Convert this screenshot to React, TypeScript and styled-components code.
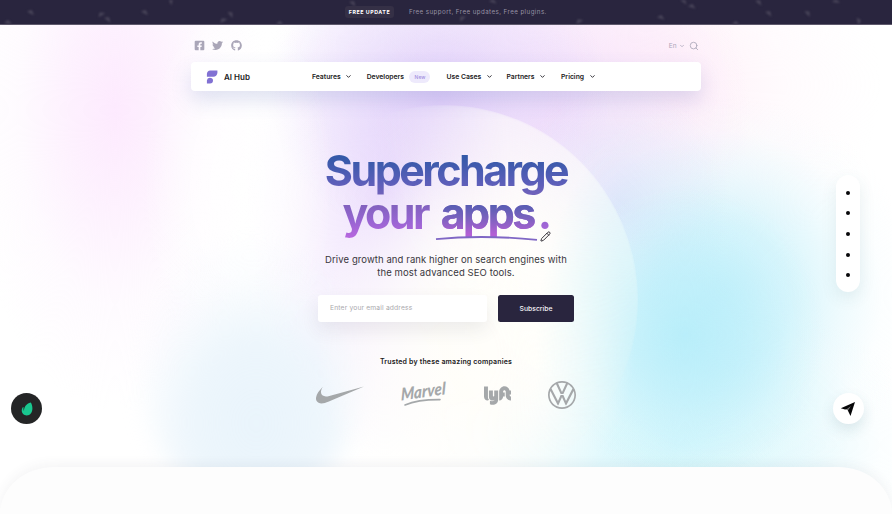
import React from "react";
import styled, { createGlobalStyle } from "styled-components";
import { FaFacebookSquare, FaTwitter, FaGithub } from "react-icons/fa";
import { SiNike, SiLyft, SiVolkswagen } from "react-icons/si";
import { ChevronDown, Search, Pencil } from "lucide-react";

const Global = createGlobalStyle`
  * { box-sizing: border-box; }
  body { margin: 0; background: #fff; font-family: Inter, sans-serif; color: #1b1a22; overflow: hidden; }
  svg { display: block; flex: none; }
`;

const Page = styled.div`
  position: relative;
  width: 892px;
  height: 514px;
  overflow: hidden;
  display: flex;
  flex-direction: column;
`;

const Promo = styled.div`
  position: relative;
  height: 24.5px;
  flex: none;
  background: #29253e;
  border-bottom: 1px solid #5e596c;
  display: flex;
  align-items: center;
  padding-left: 345px;
  gap: 15px;
`;

const Confetti = styled.svg`
  position: absolute;
  inset: 0;
  filter: blur(0.8px);
`;

const PromoTag = styled.span`
  position: relative;
  width: 49px;
  height: 12px;
  border-radius: 3px;
  background: #353046;
  color: #fff;
  font-size: 5.3px;
  line-height: 12px;
  font-weight: 700;
  letter-spacing: 0.55px;
  text-align: center;
  white-space: nowrap;
`;

const PromoText = styled.span`
  position: relative;
  color: #9793a4;
  font-size: 6.2px;
  letter-spacing: 0.43px;
  white-space: nowrap;
`;

const Hero = styled.main`
  position: relative;
  flex: 1;
  display: flex;
  flex-direction: column;
  align-items: center;
  background:
    radial-gradient(ellipse 95px 190px at 238px 160px, rgba(255,255,255,.8) 0%, rgba(255,255,255,.5) 50%, rgba(255,255,255,0) 100%),
    radial-gradient(ellipse 150px 300px at 115px 85px, #fdeafe 0%, rgba(253,238,254,.8) 32%, rgba(253,244,254,.4) 65%, rgba(255,255,255,0) 100%),
    radial-gradient(ellipse 140px 150px at 685px 310px, rgba(180,237,250,.85) 0%, rgba(184,238,250,.6) 40%, rgba(190,240,250,.2) 75%, rgba(190,240,250,0) 100%),
    radial-gradient(ellipse 195px 200px at 722px 270px, rgba(186,237,250,.75) 0%, rgba(192,239,250,.6) 35%, rgba(208,243,251,.34) 62%, rgba(230,249,253,.12) 82%, rgba(255,255,255,0) 100%),
    radial-gradient(ellipse 250px 150px at 680px 420px, rgba(200,244,251,.8) 0%, rgba(212,246,252,.5) 50%, rgba(235,251,254,.18) 80%, rgba(240,251,254,0) 100%),
    radial-gradient(ellipse 110px 120px at 620px 180px, rgba(218,224,250,.85) 0%, rgba(225,230,250,.5) 45%, rgba(230,238,252,0) 100%),
    radial-gradient(ellipse 170px 150px at 440px 70px, rgba(212,192,248,.65) 0%, rgba(222,206,250,.45) 45%, rgba(240,228,252,0) 100%),
    radial-gradient(ellipse 190px 190px at 560px 85px, rgba(240,216,250,.75) 0%, rgba(248,226,250,.5) 50%, rgba(255,244,251,0) 100%),
    radial-gradient(ellipse 210px 190px at 670px 60px, rgba(255,238,247,.9) 0%, rgba(255,246,251,.45) 55%, rgba(255,248,252,0) 100%),
    radial-gradient(ellipse 140px 260px at 385px 170px, rgba(236,221,252,.9) 0%, rgba(243,232,253,.6) 50%, rgba(255,255,255,0) 100%),
    #fff;
`;

const Orb = styled.div<{ $variant: "large" | "small" }>`
  position: absolute;
  border-radius: 50%;
  ${({ $variant }) =>
    $variant === "large"
      ? `left: 250px; top: 80px; width: 388px; height: 390px;
         background:
           radial-gradient(ellipse 110px 220px at 395px 250px, rgba(200,241,249,.75), rgba(225,249,250,0)),
           radial-gradient(ellipse 210px 260px at 215px 250px, rgba(255,254,250,1) 15%, rgba(255,254,251,.55) 100%);
         -webkit-mask-image: radial-gradient(circle 340px at 300px 70px, #000 35%, transparent 92%), linear-gradient(80deg, transparent 42%, #000 70%);
         mask-image: radial-gradient(circle 340px at 300px 70px, #000 35%, transparent 92%), linear-gradient(80deg, transparent 42%, #000 70%);
         -webkit-mask-composite: source-in;
         mask-composite: intersect;
         filter: blur(1px);`
      : `left: 142px; top: 220px; width: 220px; height: 262px;
         background: radial-gradient(ellipse 120px 150px at 52% 68%, rgba(229,242,251,.85) 0%, rgba(231,243,251,.75) 55%, rgba(238,245,253,.15) 100%);
         filter: blur(11px);`}
`;

const Glow = styled.div`
  position: absolute;
  left: 310px;
  top: 130px;
  width: 330px;
  height: 380px;
  background: radial-gradient(ellipse 160px 190px at center, rgba(255,254,250,.95) 25%, rgba(255,254,251,.65) 55%, rgba(255,255,252,0) 100%);
`;

const Utility = styled.div`
  position: relative;
  width: 505px;
  margin-top: 15px;
  height: 12px;
  display: flex;
  align-items: center;
  justify-content: space-between;
  color: #aaa6b8;
`;

const Socials = styled.div`
  display: flex;
  gap: 7.6px;
`;

const Tools = styled.div`
  display: flex;
  align-items: center;
  gap: 2px;
  font-size: 6.5px;
  svg:last-child { margin-left: 2px; }
`;

const Nav = styled.nav`
  position: relative;
  width: 510px;
  height: 29px;
  margin-top: 10.5px;
  padding-left: 15px;
  background: #fff;
  border-radius: 4px;
  box-shadow: 0 9px 20px rgba(75, 95, 175, 0.18);
  display: flex;
  align-items: center;
`;

const Brand = styled.div`
  display: flex;
  align-items: center;
  gap: 6px;
  width: 106px;
  font-size: 8px;
  font-weight: 600;
  white-space: nowrap;
`;

const NavItem = styled.a<{ $width: number }>`
  width: ${({ $width }) => $width}px;
  display: flex;
  align-items: center;
  gap: 4.5px;
  font-size: 6.8px;
  font-weight: 600;
  white-space: nowrap;
`;

const NewBadge = styled.span`
  width: 21px;
  height: 12px;
  margin-left: 1px;
  border-radius: 6px;
  background: #eeeafc;
  color: #9f8dde;
  font-size: 5px;
  line-height: 12px;
  font-weight: 500;
  text-align: center;
`;

const Title = styled.h1`
  position: relative;
  width: 260px;
  margin: 58px 0 0;
  font-size: 43px;
  font-optical-sizing: none;
  font-variation-settings: "opsz" 14;
  line-height: 42.5px;
  font-weight: 700;
  letter-spacing: -2.55px;
  text-align: center;
  white-space: nowrap;
`;

const Line = styled.span<{ $second?: boolean }>`
  display: block;
  height: 42.5px;
  padding-bottom: 10px;
  box-sizing: content-box;
  margin-bottom: -10px;
  background: ${({ $second }) =>
    $second
      ? "linear-gradient(180deg, #7760b4 10%, #9765d2 55%, #b967df 90%)"
      : "linear-gradient(180deg, #3459a8 15%, #5a5eb9 62%, #7562bb 92%)"};
  -webkit-background-clip: text;
  background-clip: text;
  color: transparent;
`;

const Word = styled.span`
  display: inline-block;
  height: 52px;
  margin: 0 1px 0 5px;
  padding-right: 3px;
  background: linear-gradient(180deg, #4d5caf 18%, #7b62be 50%, #b45fd5 82%);
  -webkit-background-clip: text;
  background-clip: text;
  vertical-align: top;
`;

const Underline = styled.svg`
  position: absolute;
  left: 119px;
  top: 86px;
`;

const PencilMark = styled(Pencil)`
  position: absolute;
  left: 224px;
  top: 82px;
  color: #25222b;
`;

const Lead = styled.p`
  position: relative;
  margin: 20px 0 0;
  font-size: 9.5px;
  line-height: 12.5px;
  letter-spacing: 0.09px;
  color: #39373d;
  text-align: center;
  white-space: nowrap;
`;

const Form = styled.form`
  position: relative;
  width: 256px;
  margin-top: 15.5px;
  display: flex;
  gap: 11px;
`;

const Email = styled.input`
  width: 169px;
  height: 27px;
  padding: 0 12px;
  border: 0;
  border-radius: 3px;
  background: #fff;
  box-shadow: 0 8px 18px rgba(60, 60, 80, 0.09);
  font: 400 6.7px Inter, sans-serif;
  letter-spacing: 0.17px;
  &::placeholder { color: #aaa9ad; opacity: 1; }
`;

const Subscribe = styled.button`
  width: 76px;
  height: 27px;
  padding: 0;
  border: 0;
  border-radius: 2.5px;
  background: #29253e;
  color: #f5f4f8;
  font: 500 6.8px Inter, sans-serif;
`;

const Trusted = styled.div`
  position: relative;
  margin-top: 34px;
  height: 12px;
  line-height: 12px;
  font-size: 7px;
  font-weight: 600;
  letter-spacing: 0.17px;
  white-space: nowrap;
`;

const Logos = styled.div`
  position: relative;
  width: 260px;
  height: 30px;
  margin-top: 12.5px;
  display: flex;
  align-items: center;
  justify-content: space-between;
  color: #a5a8aa;
`;

const MarvelMark = styled.svg`
  overflow: visible;
  margin-left: -2px;
`;

const Sheet = styled.footer`
  position: absolute;
  left: 0;
  right: 0;
  bottom: 0;
  height: 47px;
  border-radius: 54px 54px 0 0 / 47px 47px 0 0;
  background: #fdfdfd;
  box-shadow: 0 -3px 12px rgba(60, 70, 80, 0.06);
`;

const DotRail = styled.aside`
  position: absolute;
  left: 836px;
  top: 175px;
  width: 24px;
  height: 117px;
  border-radius: 12px;
  background: #fff;
  box-shadow: 0 6px 16px rgba(50, 100, 110, 0.1);
  display: flex;
  flex-direction: column;
  align-items: center;
  gap: 16.7px;
  padding-top: 15.5px;
`;

const Dot = styled.i`
  width: 4px;
  height: 4px;
  border-radius: 50%;
  background: #08080a;
`;

const Fab = styled.button<{ $side: "left" | "right" }>`
  position: absolute;
  ${({ $side }) => ($side === "left" ? "left: 11px; background: #242526;" : "left: 832.5px; background: #fff;")}
  top: 393px;
  width: 31px;
  height: 31px;
  padding: 0;
  border: 0;
  border-radius: 50%;
  display: grid;
  place-items: center;
  box-shadow: ${({ $side }) => ($side === "right" ? "0 6px 14px rgba(50,100,110,.14)" : "none")};
`;

const specks = [
  [31, 12, 20], [101, 14, -40], [108, 19, 30], [145, 12, 20], [171, 1, 60], [223, 20, -35], [231, 14, 45],
  [280, 23, 0], [353, 3, 30], [462, 18, -50], [493, 1, 10], [579, 21, -35], [661, 17, 10], [684, 1, 30],
  [692, 6, 10], [736, 23, 0], [759, 2, 30], [769, 13, 30], [808, 13, 40], [836, 1, 0], [859, 21, 70], [8, 22, 0],
];

const menu = [
  { label: "Features", width: 54.7 },
  { label: "Developers", width: 79.8, badge: "New" },
  { label: "Use Cases", width: 60 },
  { label: "Partners", width: 54.5 },
  { label: "Pricing", width: 50 },
];

function MarvelLogo() {
  return (
    <MarvelMark width="48" height="28" viewBox="0 0 48 28">
      <g transform="translate(2 19.5) rotate(-8) skewX(-8)">
        <text fontFamily="Lato, sans-serif" fontSize="17" fontStyle="italic" fontWeight="900" textLength="45" lengthAdjust="spacingAndGlyphs" fill="currentColor">
          Marvel
        </text>
      </g>
      <path d="M6 24Q19 18.4 41 18.6" fill="none" stroke="currentColor" strokeWidth="1.6" strokeLinecap="round" />
    </MarvelMark>
  );
}

export default function App() {
  return (
    <>
      <Global />
      <Page>
        <Promo>
          <Confetti width="892" height="24" viewBox="0 0 892 24">
            {specks.map(([x, y, r], i) => (
              <path key={i} d="M-4 1L0-2L4 2L0 1.5Z" fill="#4b475b" transform={`translate(${x} ${y}) rotate(${r})`} />
            ))}
          </Confetti>
          <PromoTag>FREE UPDATE</PromoTag>
          <PromoText>Free support, Free updates, Free plugins.</PromoText>
        </Promo>
        <Hero>
          <Orb $variant="small" />
          <Glow />
          <Orb $variant="large" />
          <Utility>
            <Socials>
              <FaFacebookSquare size={11} />
              <FaTwitter size={11} />
              <FaGithub size={11} />
            </Socials>
            <Tools>
              <span>En</span>
              <ChevronDown size={6} strokeWidth={3} />
              <Search size={10} strokeWidth={2} />
            </Tools>
          </Utility>
          <Nav>
            <Brand>
              <svg width="12" height="14" viewBox="0 0 12 14" fill="#8171d3">
                <path d="M4.2.5H11.4V3Q10.8 6.6 7.3 6.7H.9V3.8Q1.2.8 4.2.5ZM3.6 7.8Q7 7.8 7 10.6Q7 13.5 4 13.5H.9V10.4Q1.2 8 3.6 7.8Z" />
              </svg>
              AI Hub
            </Brand>
            {menu.map((item) => (
              <NavItem key={item.label} $width={item.width}>
                {item.label}
                {item.badge ? <NewBadge>{item.badge}</NewBadge> : <ChevronDown size={7} strokeWidth={3} />}
              </NavItem>
            ))}
          </Nav>
          <Title>
            <Line>Supercharge</Line>
            <Line $second>
              your <Word>apps</Word>.
            </Line>
            <Underline width="104" height="8" viewBox="0 0 104 8">
              <path d="M1 4.2Q47-.5 102 4.8" fill="none" stroke="#8067c5" strokeWidth="1.8" />
            </Underline>
            <PencilMark size={11} strokeWidth={2} />
          </Title>
          <Lead>
            Drive growth and rank higher on search engines with
            <br />
            the most advanced SEO tools.
          </Lead>
          <Form>
            <Email placeholder="Enter your email address" />
            <Subscribe type="button">Subscribe</Subscribe>
          </Form>
          <Trusted>Trusted by these amazing companies</Trusted>
          <Logos>
            <SiNike size={48} />
            <MarvelLogo />
            <SiLyft size={27} />
            <SiVolkswagen size={28} />
          </Logos>
        </Hero>
        <Sheet />
        <DotRail>
          {[0, 1, 2, 3, 4].map((n) => (
            <Dot key={n} />
          ))}
        </DotRail>
        <Fab $side="left" aria-label="Marketplace">
          <svg width="12" height="14" viewBox="0 0 12 14">
            <path d="M9.8.6C11.8 3.5 12 8.5 10 11.3C8 14 4 14.2 1.9 11.8C.2 9.8.5 7 1.8 5.2C2.2 4.8 2.6 5 2.5 5.7C2.3 7 2.5 8 3 9C3 5.5 5 1.5 9.8.6Z" fill="#19c78f" />
          </svg>
        </Fab>
        <Fab $side="right" aria-label="Send">
          <svg width="16" height="16" viewBox="0 0 16 16">
            <path d="M15 1L.8 7.2L5 8.5L7.5 8.2L8.2 10.2L10.5 15Z" fill="#070708" />
            <path d="M6.5 8.2L11 5L8 9.5Z" fill="#777" />
          </svg>
        </Fab>
      </Page>
    </>
  );
}
